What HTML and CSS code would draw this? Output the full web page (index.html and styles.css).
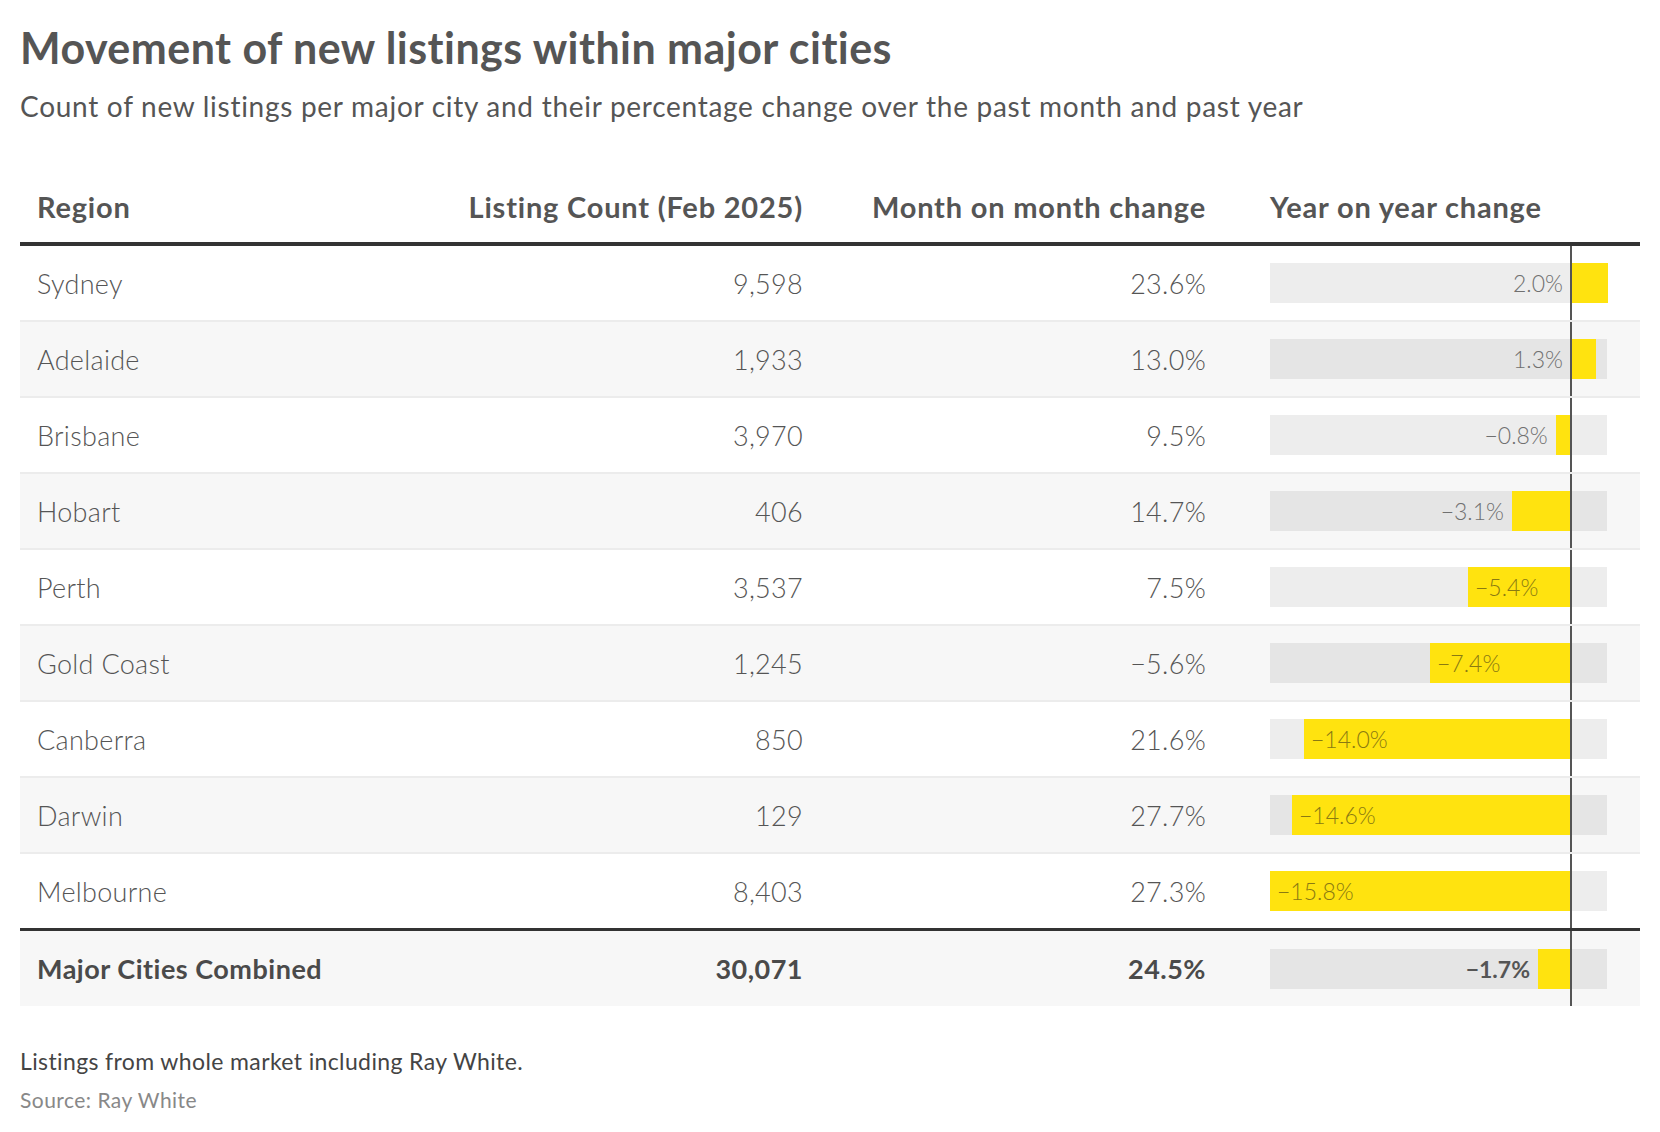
FILE: index.html
```html
<!DOCTYPE html>
<html lang="en">
<head>
<meta charset="utf-8">
<title>Movement of new listings within major cities</title>
<link rel="stylesheet" href="styles.css">
</head>
<body>
<div class="chart">
  <h1 class="title">Movement of new listings within major cities</h1>
  <p class="subtitle">Count of new listings per major city and their percentage change over the past month and past year</p>

  <div class="table">
    <div class="row head">
      <div class="cell c-region">Region</div>
      <div class="cell c-num">Listing Count (Feb 2025)</div>
      <div class="cell c-num">Month on month change</div>
      <div class="cell c-bar-head">Year on year change</div>
    </div>

    <div class="row body">
      <div class="cell c-region">Sydney</div>
      <div class="cell c-num">9,598</div>
      <div class="cell c-num">23.6%</div>
      <div class="cell c-bar"><div class="track"><div class="bar" style="left:301px;width:37px"></div><span class="lbl out-pos">2.0%</span></div></div>
    </div>
    <div class="row body alt">
      <div class="cell c-region">Adelaide</div>
      <div class="cell c-num">1,933</div>
      <div class="cell c-num">13.0%</div>
      <div class="cell c-bar"><div class="track"><div class="bar" style="left:301px;width:24.7px"></div><span class="lbl out-pos">1.3%</span></div></div>
    </div>
    <div class="row body">
      <div class="cell c-region">Brisbane</div>
      <div class="cell c-num">3,970</div>
      <div class="cell c-num">9.5%</div>
      <div class="cell c-bar"><div class="track"><div class="bar" style="left:285.8px;width:15.2px"></div><span class="lbl out-neg" style="right:59.2px">&minus;0.8%</span></div></div>
    </div>
    <div class="row body alt">
      <div class="cell c-region">Hobart</div>
      <div class="cell c-num">406</div>
      <div class="cell c-num">14.7%</div>
      <div class="cell c-bar"><div class="track"><div class="bar" style="left:242px;width:59px"></div><span class="lbl out-neg" style="right:103px">&minus;3.1%</span></div></div>
    </div>
    <div class="row body">
      <div class="cell c-region">Perth</div>
      <div class="cell c-num">3,537</div>
      <div class="cell c-num">7.5%</div>
      <div class="cell c-bar"><div class="track"><div class="bar" style="left:198px;width:103px"></div><span class="lbl in" style="left:198px">&minus;5.4%</span></div></div>
    </div>
    <div class="row body alt">
      <div class="cell c-region">Gold Coast</div>
      <div class="cell c-num">1,245</div>
      <div class="cell c-num">&minus;5.6%</div>
      <div class="cell c-bar"><div class="track"><div class="bar" style="left:160px;width:141px"></div><span class="lbl in" style="left:160px">&minus;7.4%</span></div></div>
    </div>
    <div class="row body">
      <div class="cell c-region">Canberra</div>
      <div class="cell c-num">850</div>
      <div class="cell c-num">21.6%</div>
      <div class="cell c-bar"><div class="track"><div class="bar" style="left:34px;width:267px"></div><span class="lbl in" style="left:34px">&minus;14.0%</span></div></div>
    </div>
    <div class="row body alt">
      <div class="cell c-region">Darwin</div>
      <div class="cell c-num">129</div>
      <div class="cell c-num">27.7%</div>
      <div class="cell c-bar"><div class="track"><div class="bar" style="left:22px;width:279px"></div><span class="lbl in" style="left:22px">&minus;14.6%</span></div></div>
    </div>
    <div class="row body last">
      <div class="cell c-region">Melbourne</div>
      <div class="cell c-num">8,403</div>
      <div class="cell c-num">27.3%</div>
      <div class="cell c-bar"><div class="track"><div class="bar" style="left:0px;width:301px"></div><span class="lbl in" style="left:0px">&minus;15.8%</span></div></div>
    </div>

    <div class="row total">
      <div class="cell c-region">Major Cities Combined</div>
      <div class="cell c-num">30,071</div>
      <div class="cell c-num">24.5%</div>
      <div class="cell c-bar"><div class="track"><div class="bar" style="left:268px;width:33px"></div><span class="lbl out-neg bold" style="right:77px">&minus;1.7%</span></div></div>
    </div>
  </div>

  <p class="notes">Listings from whole market including Ray White.</p>
  <p class="source">Source: Ray White</p>
</div>
</body>
</html>
```

FILE: styles.css
```css
* { box-sizing: border-box; }

html, body {
  margin: 0;
  padding: 0;
  background: #ffffff;
}

body {
  font-family: Lato, "Open Sans", "Liberation Sans", sans-serif;
  color: #555555;
}

.chart {
  padding: 23px 20px 0 20px;
}

.title {
  margin: 0;
  font-size: 43px;
  line-height: 50px;
  font-weight: 700;
  color: #555555;
  letter-spacing: 0.45px;
}

.subtitle {
  margin: 16px 0 0 0;
  font-size: 28px;
  line-height: 34px;
  font-weight: 400;
  color: #555555;
  letter-spacing: 0.72px;
}

.table {
  margin-top: 41px;
  width: 1620px;
}

.row {
  display: grid;
  grid-template-columns: 398px 400px 403px 419px;
}

.cell {
  display: flex;
  align-items: center;
  padding: 0 16px;
}

.c-region { justify-content: flex-start; padding-left: 17px; }
.c-num { justify-content: flex-end; padding-right: 15px; }

.head {
  height: 82px;
  border-bottom: 4px solid #333333;
}

.head .cell {
  font-size: 29px;
  font-weight: 700;
  color: #555555;
  letter-spacing: 0.8px;
  align-items: flex-end;
  padding-bottom: 18px;
}

.head .c-num { padding-right: 15px; }

.head .c-bar-head {
  padding-left: 49px;
}

.body {
  height: 76px;
  border-bottom: 2px solid #ececec;
  background: #ffffff;
}

.body.alt { background: #f7f7f7; }
.body.last { border-bottom: none; height: 74px; }

.body .cell {
  font-size: 27px;
  font-weight: 300;
  color: #555555;
  letter-spacing: 0.3px;
}

.total {
  height: 78px;
  border-top: 3px solid #333333;
  background: #f7f7f7;
}

.total .cell {
  font-size: 27px;
  font-weight: 700;
  color: #4a4a4a;
  letter-spacing: 0.5px;
}

.c-bar {
  position: relative;
  padding-left: 49px;
  padding-right: 33px;
}

.c-bar::after {
  content: "";
  position: absolute;
  top: 0;
  bottom: 0;
  left: 349px;
  width: 2px;
  background: #555555;
}

.track {
  position: relative;
  width: 337px;
  height: 40px;
  background: rgba(0, 0, 0, 0.07);
}

.bar {
  position: absolute;
  top: 0;
  bottom: 0;
  background: #ffe30f;
}

.lbl {
  position: absolute;
  top: 0;
  line-height: 40px;
  font-size: 23px;
  font-weight: 300;
  color: #707070;
  white-space: nowrap;
  letter-spacing: 0;
}

.body .c-bar .lbl,
.total .c-bar .lbl { letter-spacing: 0; }

.lbl.out-pos { right: 44px; }
.lbl.in { padding-left: 7px; color: #8a7a12; }
.lbl.bold { font-weight: 700; color: #555555; }

.notes {
  margin: 40px 0 0 0;
  font-size: 23px;
  line-height: 30px;
  font-weight: 400;
  color: #444444;
  letter-spacing: 0.38px;
}

.source {
  margin: 10px 0 0 0;
  font-size: 21px;
  line-height: 28px;
  font-weight: 400;
  color: #888888;
  letter-spacing: 0.46px;
}
```
